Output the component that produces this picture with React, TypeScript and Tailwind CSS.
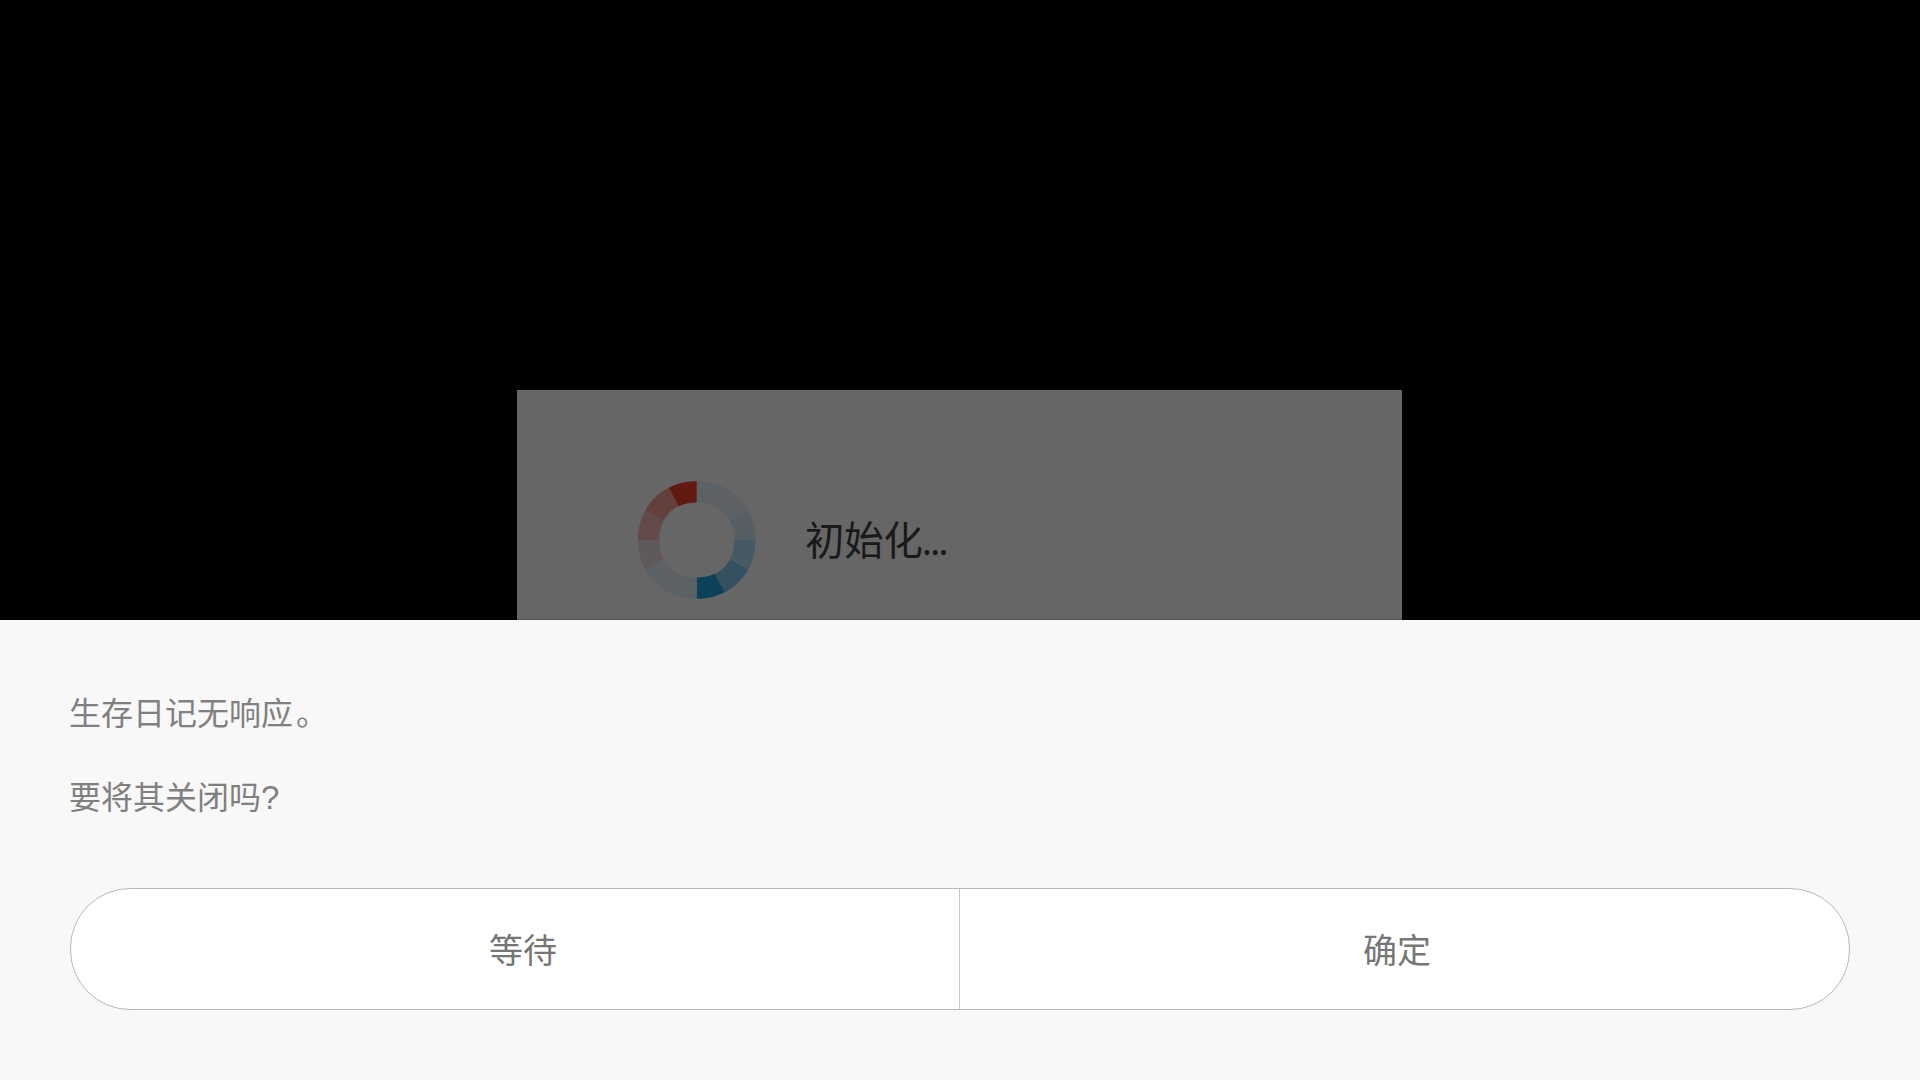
const SEGMENTS = [
  { from: 0, to: 60, color: '#5b6165' },
  { from: 60, to: 90, color: '#555f64' },
  { from: 90, to: 120, color: '#475965' },
  { from: 120, to: 152, color: '#35505e' },
  { from: 152, to: 180, color: '#0d4059' },
  { from: 180, to: 240, color: '#5c6165' },
  { from: 240, to: 270, color: '#60595b' },
  { from: 270, to: 300, color: '#624b4a' },
  { from: 300, to: 332, color: '#63403b' },
  { from: 332, to: 360, color: '#621a10' },
];

// the ring is slightly squared: radius grows by `bulge` on the diagonals
const point = (radius: number, bulge: number, angle: number) => {
  const rad = ((angle - 90) * Math.PI) / 180;
  const r = radius + bulge * Math.sin(2 * rad) ** 2;
  return `${(59.7 + r * Math.cos(rad)).toFixed(2)} ${(60 + r * Math.sin(rad)).toFixed(2)}`;
};

const ringPath = (from: number, to: number) => {
  const angles = Array.from({ length: (to - from) / 2 + 1 }, (_, i) => from + i * 2);
  const outer = angles.map((a) => point(58.8, 0.7, a));
  const inner = [...angles].reverse().map((a) => point(37.5, 1.2, a));
  return `M${[...outer, ...inner].join('L')}Z`;
};

const Spinner = () => (
  <svg width="120" height="120" viewBox="0 0 120 120" className="shrink-0">
    {SEGMENTS.map(({ from, to, color }) => (
      <path key={from} d={ringPath(from, to)} fill={color} />
    ))}
  </svg>
);

const LoadingPanel = () => (
  <div className="ml-[517px] flex h-[230px] w-[885px] items-start border-b border-[#584f53] bg-[#666666] pt-[90px] pl-[120px]">
    <Spinner />
    <p className="ml-[48px] pt-8 text-[39.3px] leading-[60px] text-[#191919]">
      初始化<span className="-ml-px font-['Noto_Sans'] text-[37px] leading-none tracking-[-1.6px]">...</span>
    </p>
  </div>
);

const AnrDialog = () => (
  <section className="flex h-[460px] flex-col bg-[#f8f8f8] px-[70px] pt-[73px] text-[32px] leading-[42px] text-[#808080]">
    <p className="-ml-px">
      生存日记无响应<span className="ml-[3px]">。</span>
    </p>
    <p className="-ml-px mt-[42px] h-[42px]">
      要将其关闭吗<span className="font-['Liberation_Sans'] text-[33px]">?</span>
    </p>
    <div className="mt-[69px] grid h-[122px] grid-cols-2 overflow-hidden rounded-[60px] border border-[#b9b9b9] bg-white text-[34px] text-[#767676]">
      <button className="border-r border-[#c6c6c6] pt-1 pl-4">等待</button>
      <button className="pt-1 pr-[15px]">确定</button>
    </div>
  </section>
);

const App = () => {
  return (
    <main className="h-[1080px] w-[1920px] overflow-hidden bg-black font-[Roboto,'Noto_Sans_CJK_SC',sans-serif]">
      <div className="h-[620px] pt-[390px]">
        <LoadingPanel />
      </div>
      <AnrDialog />
    </main>
  );
};

export default App;
